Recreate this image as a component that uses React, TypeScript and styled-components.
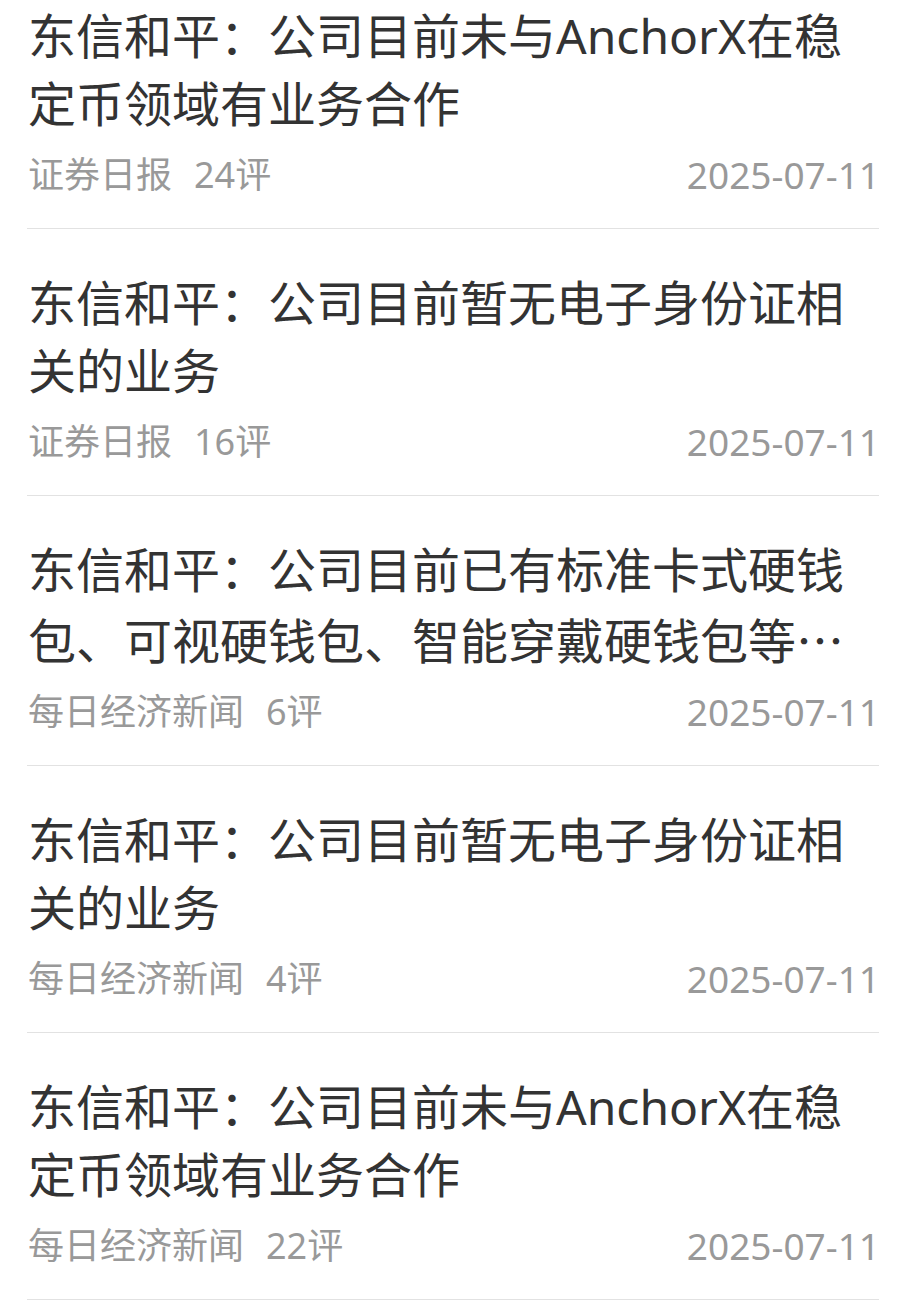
import React from "react";
import styled, { createGlobalStyle } from "styled-components";

const GlobalStyle = createGlobalStyle`
  html, body {
    margin: 0;
    padding: 0;
    background: #ffffff;
    overflow: hidden;
  }
  body {
    font-family: "Noto Sans", "Noto Sans CJK SC", sans-serif;
  }
`;

type NewsItem = {
  title: string;
  truncated?: boolean;
  source: string;
  comments: number;
  date: string;
};

const NEWS: NewsItem[] = [
  {
    title: "东信和平：公司目前未与AnchorX在稳定币领域有业务合作",
    source: "证券日报",
    comments: 24,
    date: "2025-07-11",
  },
  {
    title: "东信和平：公司目前暂无电子身份证相关的业务",
    source: "证券日报",
    comments: 16,
    date: "2025-07-11",
  },
  {
    title: "东信和平：公司目前已有标准卡式硬钱包、可视硬钱包、智能穿戴硬钱包等",
    truncated: true,
    source: "每日经济新闻",
    comments: 6,
    date: "2025-07-11",
  },
  {
    title: "东信和平：公司目前暂无电子身份证相关的业务",
    source: "每日经济新闻",
    comments: 4,
    date: "2025-07-11",
  },
  {
    title: "东信和平：公司目前未与AnchorX在稳定币领域有业务合作",
    source: "每日经济新闻",
    comments: 22,
    date: "2025-07-11",
  },
];

// list is scrolled a little, first item's top padding is off screen
const List = styled.div`
  display: flex;
  flex-direction: column;
  margin-top: -38px;
`;

const Row = styled.div`
  display: flex;
  flex-direction: column;
  margin: 0 28px 0 27px;
  padding: 40px 0 29px 1px;
  border-bottom: 1px solid #e2e2e2;
`;

const Title = styled.div`
  font-size: 48px;
  line-height: 68px;
  color: #333333;
  display: -webkit-box;
  -webkit-box-orient: vertical;
  -webkit-line-clamp: 2;
  overflow: hidden;
  word-break: break-all;
`;

const Ellipsis = styled.span`
  font-family: "Noto Sans CJK SC", sans-serif;
`;

const Meta = styled.div`
  display: flex;
  align-items: center;
  margin-top: 13px;
  height: 48px;
  font-size: 36px;
  line-height: 48px;
  color: #999999;
`;

const Source = styled.span`
  margin-right: 22px;
`;

const Comments = styled.span`
  flex: 1;
`;

const DateText = styled.span`
  font-size: 37px;
  margin-right: -1px;
`;

export default function App() {
  return (
    <>
      <GlobalStyle />
      <List>
        {NEWS.map((item, i) => (
          <Row key={i}>
            <Title lang="zh-CN">
              {item.title}
              {item.truncated && <Ellipsis>⋯</Ellipsis>}
            </Title>
            <Meta>
              <Source>{item.source}</Source>
              <Comments>{item.comments}评</Comments>
              <DateText>{item.date}</DateText>
            </Meta>
          </Row>
        ))}
      </List>
    </>
  );
}
